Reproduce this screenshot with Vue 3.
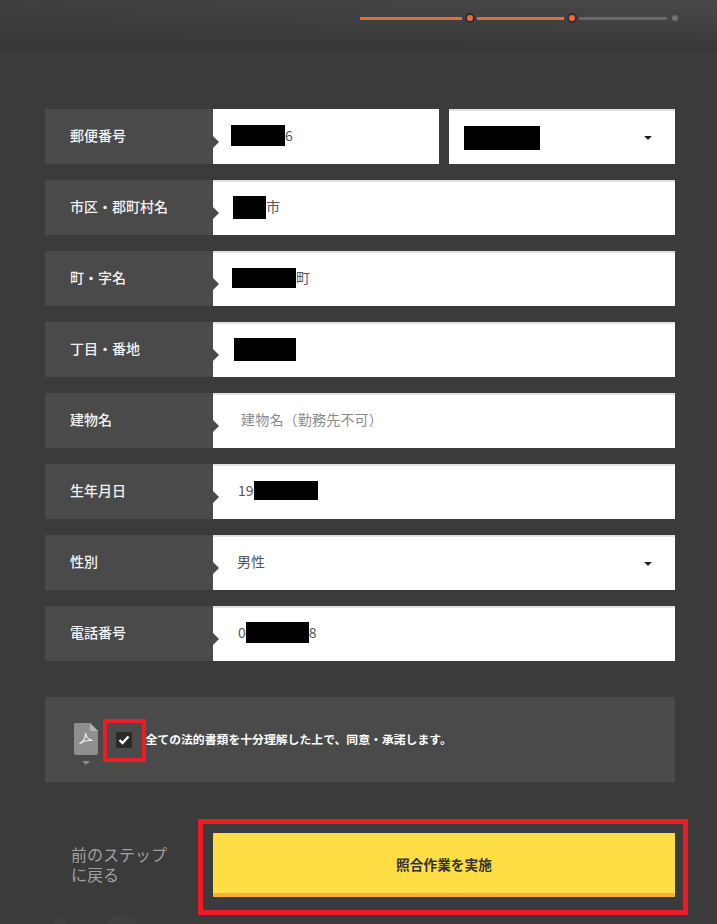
<template>
  <div class="page">
    <header class="top">
      <div class="steps">
        <span class="steps__line steps__line--first steps__line--on"></span>
        <span class="steps__dot steps__dot--on"></span>
        <span class="steps__line steps__line--on"></span>
        <span class="steps__dot steps__dot--on"></span>
        <span class="steps__line"></span>
        <span class="steps__dot"></span>
      </div>
    </header>

    <form class="form" @submit.prevent>
      <div v-for="row in rows" :key="row.label" class="row">
        <div class="row__label">{{ row.label }}</div>
        <div class="row__fields">
          <div
            v-for="(field, i) in row.fields"
            :key="i"
            class="field"
            :class="{ 'field--top': row.topLine || field.select }"
            :style="{ paddingLeft: field.pad + 'px' }"
          >
            <span v-if="field.before" class="field__text">{{ field.before }}</span>
            <span
              v-if="field.mask"
              class="field__mask"
              :style="{ width: field.mask + 'px', height: field.maskH + 'px', marginBottom: field.up + 'px' }"
            ></span>
            <span v-if="field.after" class="field__text" :class="{ 'field__text--hint': field.hint }">{{ field.after }}</span>
            <span v-if="field.select" class="field__caret"></span>
          </div>
        </div>
      </div>

      <div class="agree">
        <div class="agree__pdf">
          <svg width="24" height="32" viewBox="0 0 24 32">
            <path d="M1 0h15l8 8v22a2 2 0 0 1-2 2H2a2 2 0 0 1-2-2V1a1 1 0 0 1 1-1z" fill="#8e8e8e" />
            <path d="M16 0l8 8h-8z" fill="#b4b4b4" />
            <path
              d="M11.500 10c.6 3.500 2.500 6.500 7 7.500M11.500 10c.5 4-1.500 8-6 11M5.500 21c3-2.500 8-4 13-3.500"
              fill="none"
              stroke="#eee"
              stroke-width="1.200"
            />
          </svg>
          <span class="agree__arrow"></span>
        </div>
        <div class="agree__mark">
          <span class="check">
            <svg width="12" height="10" viewBox="0 0 12 10">
              <path d="M1.500 5l3 3 6-6.500" fill="none" stroke="#fff" stroke-width="2.400" />
            </svg>
          </span>
          <span class="redbox redbox--check"></span>
        </div>
        <p class="agree__text">全ての法的書類を十分理解した上で、同意・承諾します。</p>
      </div>

      <div class="actions">
        <a class="back" href="#">前のステップ<br />に戻る</a>
        <button class="submit" type="button">照合作業を実施</button>
        <span class="redbox redbox--submit"></span>
      </div>
    </form>
    <span class="hill hill--small"></span>
    <span class="hill hill--big"></span>
  </div>
</template>

<script setup>
const rows = [
  {
    label: '郵便番号',
    fields: [
      { pad: 18, mask: 54, maskH: 21, up: 4, after: '6' },
      { pad: 15, mask: 76, maskH: 24, up: 0, select: true },
    ],
  },
  { label: '市区・郡町村名', topLine: true, fields: [{ pad: 20, mask: 33, maskH: 23, up: 2, after: '市' }] },
  { label: '町・字名', topLine: true, fields: [{ pad: 19, mask: 64, maskH: 20, up: 3, after: '町' }] },
  { label: '丁目・番地', topLine: true, fields: [{ pad: 21, mask: 62, maskH: 23, up: 2 }] },
  { label: '建物名', topLine: true, fields: [{ pad: 28, after: '建物名（勤務先不可）', hint: true }] },
  { label: '生年月日', topLine: true, fields: [{ pad: 25, before: '19', mask: 64, maskH: 19, up: 4 }] },
  { label: '性別', topLine: true, fields: [{ pad: 24, after: '男性', select: true }] },
  { label: '電話番号', topLine: true, fields: [{ pad: 25, before: '0', mask: 63, maskH: 21, up: 4, after: '8' }] },
]
</script>

<style>
html,
body {
  margin: 0;
  background: #3b3b3b;
}
</style>

<style scoped>
.page {
  position: relative;
  height: 924px;
  overflow: hidden;
  background: #3b3b3b;
  font-family: 'Noto Sans CJK JP', 'Liberation Sans', sans-serif;
}

.top {
  height: 53px;
  background:
    linear-gradient(180deg, rgba(55, 55, 55, 0) 0%, #373737 100%),
    linear-gradient(90deg, #3f3f3f 0%, #4a4a4a 100%);
  box-sizing: border-box;
  padding: 15px 39px 0 360px;
}

.steps {
  display: flex;
  align-items: center;
  height: 6px;
}

.steps__line {
  width: 88px;
  height: 3px;
  margin: 0 5px 0 4px;
  background: #686868;
}

.steps__line--first {
  width: 102px;
  margin-left: 0;
}

.steps__line--on {
  background: #e8693a;
}

.steps__dot {
  flex: none;
  width: 6px;
  height: 6px;
  border-radius: 50%;
  background: #707070;
}

.steps__dot--on {
  background: #ee6b37;
  box-shadow: 0 0 0 2px #2f2f2f;
}

.form {
  padding: 56px 42px 0 45px;
}

.row {
  display: flex;
  height: 55px;
  margin-bottom: 16px;
}

.row__label {
  position: relative;
  flex: none;
  width: 168px;
  box-sizing: border-box;
  padding: 0 0 3px 25px;
  display: flex;
  align-items: center;
  background: #4a4a4a;
  color: #f2f2f2;
  font-size: 14px;
  font-weight: 500;
}

.row__label::after {
  content: '';
  position: absolute;
  left: 100%;
  top: 27px;
  border-style: solid;
  border-width: 6px 0 6px 6px;
  border-color: transparent transparent transparent #4a4a4a;
  z-index: 1;
}

.row__fields {
  flex: 1;
  display: flex;
  justify-content: space-between;
}

.field {
  position: relative;
  flex: 1 0 226px;
  max-width: 100%;
  display: flex;
  align-items: center;
  box-sizing: border-box;
  background: #fff;
  border-top: 2px solid #fff;
  color: #555;
  font-size: 14px;
}

.field:not(:only-child) {
  flex: 0 0 226px;
}

.field--top {
  border-top-color: #e2e2e2;
}

.field__text {
  margin-bottom: 5px;
}

.field__text--hint {
  color: #8a8a8a;
  letter-spacing: 0.2px;
}

.field__mask {
  flex: none;
  background: #000;
}

.field__caret {
  position: absolute;
  right: 23px;
  top: 50%;
  margin-top: -2px;
  border-style: solid;
  border-width: 4px 4px 0 4px;
  border-color: #222 transparent transparent transparent;
}

.agree {
  height: 85px;
  margin-top: 36px;
  padding-left: 29px;
  box-sizing: border-box;
  display: flex;
  align-items: center;
  background: #4a4a4a;
}

.agree__pdf {
  flex: none;
  width: 24px;
  display: flex;
  flex-direction: column;
  align-items: center;
  gap: 6px;
  margin: 9px 0 0;
}

.agree__arrow {
  border-style: solid;
  border-width: 4px 4px 0 4px;
  border-color: #8c8c8c transparent transparent transparent;
}

.agree__mark {
  position: relative;
  flex: none;
  width: 16px;
  height: 16px;
  margin: 0 14px 0 18px;
}

.check {
  display: flex;
  align-items: center;
  justify-content: center;
  width: 16px;
  height: 16px;
  background: #2a2a2a;
}

.agree__text {
  margin: 0 0 2px -0.5px;
  color: #fff;
  font-size: 11.850px;
  font-weight: 700;
}

.redbox {
  position: absolute;
  box-sizing: border-box;
  border-style: solid;
  border-color: #ed1c24;
  pointer-events: none;
}

.redbox--check {
  left: -13px;
  top: -13px;
  width: 43px;
  height: 43px;
  border-width: 4px;
}

.actions {
  position: relative;
  display: flex;
  align-items: center;
  margin-top: 51px;
}

.back {
  flex: none;
  width: 142px;
  margin: 0 0 2px 26px;
  color: #a0a0a0;
  font-size: 16px;
  line-height: 20px;
  text-decoration: none;
}

.submit {
  flex: 1;
  height: 64px;
  padding: 2px 0 0;
  border: 0;
  border-bottom: 4px solid #f5b030;
  background: #ffdd44;
  color: #333;
  font-family: inherit;
  font-size: 13.700px;
  font-weight: 700;
}

.redbox--submit {
  left: 153px;
  top: -14px;
  width: 490px;
  height: 96px;
  border-width: 5px;
}

.hill {
  position: absolute;
  border-radius: 50% 50% 0 0;
  background: #404040;
}

.hill--small {
  left: 55px;
  top: 917px;
  width: 10px;
  height: 7px;
}

.hill--big {
  left: 108px;
  top: 915px;
  width: 28px;
  height: 9px;
}
</style>
